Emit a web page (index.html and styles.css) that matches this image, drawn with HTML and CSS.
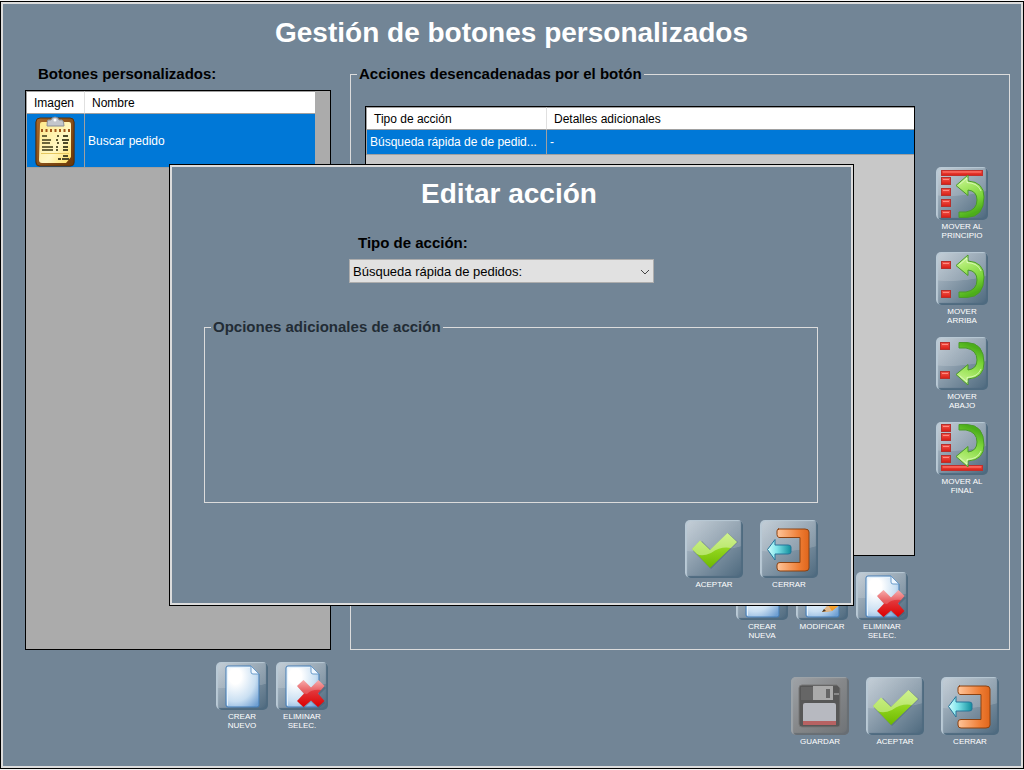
FILE: index.html
```html
<!DOCTYPE html>
<html lang="es">
<head>
    <meta charset="UTF-8" />
    <meta name="viewport" content="width=device-width, initial-scale=1.0" />
    <title>Gestión de botones personalizados</title>
    <link rel="stylesheet" href="styles.css">
</head>
<body>
    <!-- Shared icons -->
    <svg class="sprite" aria-hidden="true">
        <defs>
            <linearGradient id="gGreen" x1="0" y1="0" x2="0" y2="1">
                <stop offset="0" stop-color="#b4e65a" />
                <stop offset="0.5" stop-color="#8fd41c" />
                <stop offset="1" stop-color="#6db800" />
            </linearGradient>
            <linearGradient id="gArrow" x1="0" y1="0" x2="0.3" y2="1">
                <stop offset="0" stop-color="#d4f7a6" />
                <stop offset="0.35" stop-color="#a8e868" />
                <stop offset="0.7" stop-color="#7ad438" />
                <stop offset="1" stop-color="#4cae1a" />
            </linearGradient>
            <linearGradient id="gRed" x1="0" y1="0" x2="0" y2="1">
                <stop offset="0" stop-color="#f79a9a" />
                <stop offset="0.4" stop-color="#e2383c" />
                <stop offset="1" stop-color="#dd0000" />
            </linearGradient>
            <linearGradient id="gBlock" x1="0" y1="0" x2="0" y2="1">
                <stop offset="0" stop-color="#f4574c" />
                <stop offset="1" stop-color="#d81d14" />
            </linearGradient>
            <linearGradient id="gOrange" x1="0" y1="0" x2="1" y2="0">
                <stop offset="0" stop-color="#ffc59a" />
                <stop offset="0.7" stop-color="#ee7c33" />
                <stop offset="1" stop-color="#e0661c" />
            </linearGradient>
            <linearGradient id="gCyan" x1="0" y1="0" x2="1" y2="0">
                <stop offset="0" stop-color="#d2ffff" />
                <stop offset="0.4" stop-color="#7fe4ea" />
                <stop offset="1" stop-color="#108e9c" />
            </linearGradient>
            <radialGradient id="gPage" cx="0.28" cy="0.25" r="0.95">
                <stop offset="0" stop-color="#ffffff" />
                <stop offset="0.2" stop-color="#ffffff" />
                <stop offset="0.65" stop-color="#c9dff2" />
                <stop offset="1" stop-color="#6f9fd2" />
            </radialGradient>
            <linearGradient id="gWood" x1="0" y1="0" x2="1" y2="1">
                <stop offset="0" stop-color="#a8682a" />
                <stop offset="1" stop-color="#6b3808" />
            </linearGradient>
            <linearGradient id="gPaper" x1="0" y1="0" x2="1" y2="1">
                <stop offset="0" stop-color="#ffe98a" />
                <stop offset="0.6" stop-color="#fff7c4" />
                <stop offset="1" stop-color="#ffdf60" />
            </linearGradient>
            <linearGradient id="gPencil" x1="0" y1="0" x2="0" y2="1">
                <stop offset="0" stop-color="#ffd070" />
                <stop offset="1" stop-color="#f09018" />
            </linearGradient>
        </defs>

        <symbol id="check" viewBox="0 0 58 58">
            <path d="M8 31 L17 21 L26 30 L43 13 L53 22 L26 49 Z" fill="#304a5c" opacity="0.3" />
            <path d="M7 29 L15 20.500 L25 30 L42.500 13 L52 22 L25 48 Z" fill="url(#gGreen)" />
            <path d="M7 29 L15 20.500 L25 30 L42.500 13 L52 22 L46 28 Q36 26 26 33 Q17 37 12 34 Z" fill="#f0ffd0" opacity="0.45" />
        </symbol>

        <symbol id="exit" viewBox="0 0 58 58">
            <path d="M18 9 H45 Q49 9 49 12 V48 Q49 51 45 51 H20 Q17 51 17 48 V45 Q17 42.500 20 42.500 H40 V17.500 H19 Q17 17 17 14.500 V11 Q17 9 19 9 Z" fill="url(#gOrange)" stroke="#8a4212" stroke-width="1" />
            <path d="M7.500 29.500 L15 19.500 V25 H28 Q31 25 31 27 V32 Q31 34 28 34 H15 V40 Z" fill="url(#gCyan)" stroke="#28759a" stroke-width="1" />
        </symbol>

        <symbol id="save" viewBox="0 0 58 58">
            <path d="M11 8 H46 L49 11 V48 Q49 50 47 50 H11 Q8 50 8 47 V11 Q8 8 11 8 Z" fill="#575757" stroke="#777" />
            <path d="M10 10 H22 V23 H10 Z" fill="#666" />
            <rect x="22" y="9" width="20" height="14" fill="#aaa" />
            <rect x="35" y="12" width="4" height="9" fill="#666" />
            <rect x="43" y="16" width="5" height="2" fill="#888" />
            <path d="M12 28 Q12 26 14 26 H43 Q45 26 45 28 V48 H12 Z" fill="#b7b9c0" />
            <rect x="12" y="44" width="33" height="4" fill="#b76262" />
        </symbol>

        <symbol id="page" viewBox="0 0 52 48">
            <path d="M12 4 H35 L43 12 V43 Q43 45 41 45 H12 Q10 45 10 43 V6 Q10 4 12 4 Z" fill="url(#gPage)" stroke="#427cb6" stroke-width="1" />
            <path d="M11.500 43.500 V6 Q11.500 5.500 13 5.500 H34" fill="none" stroke="#e6f3fc" />
            <path d="M35 4 V10 Q35 12 37 12 H43 Z" fill="#eff7ff" stroke="#6a9bca" />
        </symbol>

        <symbol id="delete" viewBox="0 0 52 48">
            <use href="#page" />
            <path d="M22 25 L28 20 L36 27 L43 20 L50 26 L43 33 L49 41 L43 46 L35 40 L28 46 L22 40 L29 33 Z" fill="#304a5c" opacity="0.3" />
            <path d="M21 24 L27.500 18 L35 25.500 L42.500 18 L48.500 24 L42 31.500 L48.500 39 L42 45 L35 38.500 L27.500 45 L21 39 L28 31.500 Z" fill="url(#gRed)" />
            <path d="M21 24 L27.500 18 L35 25.500 L42.500 18 L48.500 24 L45 28 Q36 27 31 32 L28 31.500 Z" fill="#fff" opacity="0.2" />
        </symbol>

        <symbol id="edit" viewBox="0 0 52 48">
            <use href="#page" />
            <path d="M26 40 L32 33 L45 22 L50 28 L36 39 Z" fill="url(#gPencil)" />
            <path d="M26 40 L32 33 L36 39 Z" fill="#e3b98a" />
            <path d="M26 40 L28 37 L30 39 Z" fill="#443322" />
        </symbol>

        <symbol id="block" viewBox="0 0 10 8">
            <rect x="0.500" y="0.500" width="9" height="7" fill="url(#gBlock)" stroke="#b5302c" />
            <path d="M2 2.500 H8" stroke="#ff8a80" />
        </symbol>

        <symbol id="bar" viewBox="0 0 42 6">
            <rect x="0.500" y="0.500" width="41" height="5" fill="url(#gBlock)" stroke="#c0302c" />
            <path d="M2 2 H40" stroke="#ff7a70" />
        </symbol>

        <symbol id="arrow" viewBox="0 0 32 45">
            <path d="M2 11.500 L14 1 V7 Q30 8 30 23 Q30 43 13 43.500 H5 V38 H12 Q23 36 23 26 Q23 17 14 16 V21.500 Z" fill="url(#gArrow)" stroke="#4b9a2a" stroke-width="1" />
            <path d="M5.500 10.500 L13 4 V8.500 Q24 9 27 17" fill="none" stroke="#eaffd0" opacity="0.7" />
        </symbol>

        <symbol id="first" viewBox="0 0 52 53">
            <use href="#bar" x="5" y="3" width="42" height="6" />
            <use href="#block" x="5" y="10" width="10" height="8" />
            <use href="#block" x="5" y="21" width="10" height="8" />
            <use href="#block" x="5" y="32" width="10" height="8" />
            <use href="#block" x="5" y="43" width="10" height="8" />
            <use href="#arrow" x="18" y="7" width="32" height="45" />
        </symbol>

        <symbol id="up" viewBox="0 0 52 53">
            <use href="#block" x="5" y="9" width="10" height="8" />
            <use href="#block" x="5" y="38" width="10" height="8" />
            <use href="#arrow" x="18" y="2" width="32" height="45" />
        </symbol>

        <symbol id="down" viewBox="0 0 52 53">
            <use href="#block" x="4" y="5" width="10" height="8" />
            <use href="#block" x="4" y="34" width="10" height="8" />
            <g transform="translate(0 50) scale(1 -1)">
                <use href="#arrow" x="18" y="1" width="32" height="45" />
            </g>
        </symbol>

        <symbol id="last" viewBox="0 0 52 53">
            <use href="#block" x="5" y="2" width="10" height="8" />
            <use href="#block" x="5" y="11" width="10" height="8" />
            <use href="#block" x="5" y="22" width="10" height="8" />
            <use href="#block" x="5" y="33" width="10" height="8" />
            <use href="#bar" x="5" y="43" width="42" height="6" />
            <g transform="translate(0 46) scale(1 -1)">
                <use href="#arrow" x="18" y="0" width="32" height="45" />
            </g>
        </symbol>
    </svg>

    <div class="window">
        <h1>Gestión de botones personalizados</h1>
        <main>
            <section class="buttons-panel">
                <h2>Botones personalizados:</h2>
                <div class="grid-box">
                    <table class="buttons-table">
                        <thead>
                            <tr>
                                <th class="col-image">Imagen</th>
                                <th>Nombre</th>
                            </tr>
                        </thead>
                        <tbody>
                            <tr>
                                <td class="cell-image">
                                    <svg width="44" height="52" viewBox="0 0 44 52">
                                        <rect x="2" y="4" width="40" height="48" rx="5" fill="#123c66" opacity="0.5" />
                                        <rect x="3" y="3" width="38" height="48" rx="4" fill="url(#gWood)" stroke="#5c3007" />
                                        <path d="M7 9 Q7 7 9 7 H36 Q38 7 38 9 V42 L33 48 H9 Q6 48 6 45 Z" fill="url(#gPaper)" />
                                        <path d="M15 5 H18 Q19 2 22 2 Q25 2 26 5 H29 Q31 6 31 11 H14 Q14 6 15 5 Z" fill="#c3c6cc" stroke="#8b8f96" />
                                        <circle cx="22" cy="5" r="1.500" fill="#fff" />
                                        <path d="M8 15.500 H37" stroke="#a0561a" stroke-width="3" stroke-dasharray="2 2.500" />
                                        <path d="M9 21 H14 M9 25 H18 M9 28 H17 M9 32 H20 M9 35 H20" stroke="#6b663c" stroke-width="2" />
                                        <path d="M24 21 H26 M23 25 H25 M24 28 H26 M23 32 H25 M23 35 H25" stroke="#5e5a34" stroke-width="2" />
                                        <path d="M30 21 H35 M29 25 H36 M30 28 H35 M30 32 H35 M30 35 H35 M30 41 H35 M25 44 H28 M29 44 H36" stroke="#4e4a2a" stroke-width="2" />
                                        <path d="M8 38.500 H36" stroke="#e6c860" />
                                    </svg>
                                </td>
                                <td>Buscar pedido</td>
                            </tr>
                        </tbody>
                    </table>
                </div>
            </section>

            <fieldset class="actions-panel">
                <legend>Acciones desencadenadas por el botón</legend>
                <div class="actions-body">
                    <div class="grid-box light">
                        <table class="actions-table">
                            <thead>
                                <tr>
                                    <th class="col-type">Tipo de acción</th>
                                    <th>Detalles adicionales</th>
                                </tr>
                            </thead>
                            <tbody>
                                <tr>
                                    <td>Búsqueda rápida de de pedid...</td>
                                    <td>-</td>
                                </tr>
                            </tbody>
                        </table>
                    </div>
                    <div class="move-buttons">
                        <button type="button" class="tool tall"><svg class="tile"><use href="#first" /></svg>MOVER AL PRINCIPIO</button>
                        <button type="button" class="tool tall"><svg class="tile"><use href="#up" /></svg>MOVER ARRIBA</button>
                        <button type="button" class="tool tall"><svg class="tile"><use href="#down" /></svg>MOVER ABAJO</button>
                        <button type="button" class="tool tall"><svg class="tile"><use href="#last" /></svg>MOVER AL FINAL</button>
                    </div>
                </div>
                <div class="action-buttons">
                    <button type="button" class="tool"><svg class="tile"><use href="#page" /></svg>CREAR NUEVA</button>
                    <button type="button" class="tool"><svg class="tile"><use href="#edit" /></svg>MODIFICAR</button>
                    <button type="button" class="tool"><svg class="tile"><use href="#delete" /></svg>ELIMINAR SELEC.</button>
                </div>
            </fieldset>

            <div class="list-buttons">
                <button type="button" class="tool"><svg class="tile"><use href="#page" /></svg>CREAR NUEVO</button>
                <button type="button" class="tool"><svg class="tile"><use href="#delete" /></svg>ELIMINAR SELEC.</button>
            </div>

            <div class="window-buttons">
                <button type="button" class="tool big" disabled><svg class="tile"><use href="#save" /></svg>GUARDAR</button>
                <button type="button" class="tool big"><svg class="tile"><use href="#check" /></svg>ACEPTAR</button>
                <button type="button" class="tool big"><svg class="tile"><use href="#exit" /></svg>CERRAR</button>
            </div>
        </main>
    </div>

    <div class="overlay">
        <div class="dialog" role="dialog" aria-labelledby="dialogTitle">
            <h1 id="dialogTitle">Editar acción</h1>
            <div class="field">
                <label for="actionType">Tipo de acción:</label>
                <div class="select-wrap">
                    <select id="actionType">
                        <option>Búsqueda rápida de pedidos:</option>
                    </select>
                    <svg class="chevron" width="10" height="6" viewBox="0 0 10 6"><path d="M1 1 L5 5 L9 1" fill="none" stroke="#444" /></svg>
                </div>
            </div>
            <fieldset class="options">
                <legend>Opciones adicionales de acción</legend>
            </fieldset>
            <div class="dialog-buttons">
                <button type="button" class="tool big"><svg class="tile"><use href="#check" /></svg>ACEPTAR</button>
                <button type="button" class="tool big"><svg class="tile"><use href="#exit" /></svg>CERRAR</button>
            </div>
        </div>
    </div>
</body>
</html>
```

FILE: styles.css
```css
:root {
    --window: #728596;
    --frame: #dcdcdc;
    --list: #ababab;
    --list-light: #c8c8c8;
    --selected: #0078d7;
    --line: #a0a0a0;
}
* {
    box-sizing: border-box;
}
body {
    margin: 0;
    padding: 1px 0;
    min-height: 100vh;
    display: flex;
    background: #f4f4f4;
    font-family: "Liberation Sans", Arial, sans-serif;
    font-size: 12px;
    color: #000;
}
.sprite {
    position: absolute;
    width: 0;
    height: 0;
}
.window {
    flex: 1;
    display: flex;
    flex-direction: column;
    padding: 15px 13px 22px 24px;
    background: var(--window);
    border: 1px solid #000;
    box-shadow: inset 0 0 0 2px var(--frame);
}
h1 {
    margin: 0;
    padding-right: 12px;
    text-align: center;
    font-size: 28px;
    line-height: 32px;
    color: #fff;
}
h2, legend, label {
    margin: 0;
    font-size: 15px;
    font-weight: bold;
    line-height: 18px;
}
main {
    flex: 1;
    display: grid;
    grid-template-columns: 306px 1fr;
    grid-template-rows: 1fr auto;
    gap: 12px 19px;
    margin-top: 16px;
}
fieldset {
    margin: 0;
    min-width: 0;
    border: 1px solid var(--frame);
}
legend {
    padding: 0 2px;
}

/* Lists */
.buttons-panel {
    display: flex;
    flex-direction: column;
    gap: 7px;
}
.buttons-panel h2 {
    padding-left: 13px;
}
.grid-box {
    flex: 1;
    background: var(--list);
    border: 1px solid #000;
}
.buttons-panel .grid-box {
    padding-right: 15px;
}
.grid-box.light {
    background: var(--list-light);
}
table {
    width: 100%;
    table-layout: fixed;
    border-collapse: separate;
    border-spacing: 0;
    border-left: 1px solid var(--line);
}
th {
    height: 23px;
    padding: 0 7px;
    background: #fff;
    border-top: 1px solid var(--line);
    border-right: 1px solid #e0e0e0;
    border-bottom: 1px solid var(--line);
    font-weight: normal;
    text-align: left;
}
td {
    height: 25px;
    padding: 0 3px;
    background: var(--selected);
    border-right: 1px solid var(--line);
    border-bottom: 1px solid var(--line);
    color: #fff;
    white-space: nowrap;
}
th:last-child, td:last-child {
    border-right: none;
}
.col-image {
    width: 58px;
}
.col-type {
    width: 180px;
}
.buttons-table td {
    height: 54px;
}
.buttons-table .cell-image {
    padding: 0 0 0 6px;
}
.cell-image svg {
    display: block;
}

/* Actions */
.actions-panel {
    display: flex;
    flex-direction: column;
    padding: 23px 21px 9px 14px;
}
.actions-panel legend, .options legend {
    margin-left: -8px;
}
.actions-body {
    flex: 1;
    display: flex;
    gap: 21px;
    height: 450px;
}
.move-buttons {
    display: flex;
    flex-direction: column;
    gap: 12px;
    padding-top: 61px;
}
.action-buttons {
    display: flex;
    justify-content: flex-end;
    gap: 8px;
    margin-top: 16px;
    padding-right: 80px;
}
.list-buttons {
    display: flex;
    justify-content: flex-end;
    align-items: flex-start;
    gap: 8px;
    padding-right: 3px;
}
.window-buttons, .dialog-buttons {
    display: flex;
    justify-content: flex-end;
    gap: 17px;
}
.window-buttons {
    padding: 15px 11px 0 0;
}

/* Icon buttons */
.tool {
    display: flex;
    flex-direction: column;
    align-items: center;
    justify-content: flex-start;
    gap: 2px;
    width: 52px;
    padding: 0;
    background: none;
    border: none;
    color: #fff;
    font-family: inherit;
    font-size: 8px;
    line-height: 9px;
    cursor: pointer;
}
.tile {
    display: block;
    flex: none;
    width: 52px;
    height: 48px;
    border-radius: 5px;
    background:
        radial-gradient(ellipse 130% 55% at 25% 0, rgba(255, 255, 255, 0.15) 98%, transparent 100%),
        linear-gradient(135deg, #bcc8d2 0%, #8a9cab 45%, #4c687d 100%);
    box-shadow: inset 2px 1px 1px #b9c9d5, inset -2px -2px 1px #4f6b80;
}
.tall .tile {
    height: 53px;
}
.big, .big .tile {
    width: 58px;
}
.big .tile {
    height: 58px;
}
.tool:disabled {
    cursor: default;
}
.tool:disabled .tile {
    background: linear-gradient(135deg, #a0a4a8 0%, #858789 50%, #6e7276 100%);
    box-shadow: inset 2px 1px 1px #9da3a8, inset -2px -2px 1px #686e74;
}

/* Dialog */
.overlay {
    position: fixed;
    inset: 0;
    display: flex;
    justify-content: center;
    align-items: center;
    padding-right: 1px;
}
.dialog {
    width: 685px;
    max-width: 100%;
    padding: 13px 35px 16px 34px;
    background: var(--window);
    border: 1px solid #000;
    box-shadow: inset 0 0 0 2px var(--frame);
}
.dialog h1 {
    padding-right: 4px;
}
.field {
    display: flex;
    flex-direction: column;
    gap: 7px;
    width: 305px;
    margin: 24px auto 35px 145px;
}
.field label {
    padding-left: 9px;
}
.select-wrap {
    position: relative;
}
select {
    appearance: none;
    display: block;
    width: 100%;
    height: 24px;
    padding: 0 24px 0 3px;
    background: #e1e1e1;
    border: 1px solid #adadad;
    border-radius: 0;
    color: #000;
    font-family: inherit;
    font-size: 13px;
}
.chevron {
    position: absolute;
    right: 4px;
    top: 10px;
    pointer-events: none;
}
.options {
    height: 185px;
    padding: 0 14px;
}
.options legend {
    color: #222c35;
}
.dialog-buttons {
    margin-top: 17px;
}
```
